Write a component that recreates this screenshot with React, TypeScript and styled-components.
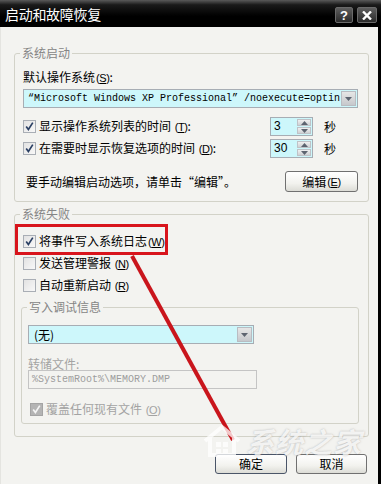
import styled, { createGlobalStyle } from 'styled-components';

const GlobalStyle = createGlobalStyle`
  html, body {
    margin: 0;
    padding: 0;
    background: #000000;
  }
  body {
    font-family: 'Noto Sans CJK SC', 'Liberation Sans', sans-serif;
    font-size: 12px;
    color: #000000;
  }
`;

const Key = ({ k }: { k: string }) => (
  <KeyText>
    (<u>{k}</u>)
  </KeyText>
);

const CheckBox = ({ checked = false, disabled = false }: { checked?: boolean; disabled?: boolean }) => (
  <Box $disabled={disabled}>
    {checked && (
      <svg width='11' height='11' viewBox='0 0 11 11'>
        <path
          d='M2.2 5.4 L4.4 8.4 L8.8 1.6'
          fill='none'
          stroke={disabled ? '#f4f4f4' : '#2a3f63'}
          strokeWidth='1.7'
        />
      </svg>
    )}
  </Box>
);

const DropArrow = () => (
  <DropButton>
    <svg width='7' height='4' viewBox='0 0 7 4'>
      <path d='M0 0 L7 0 L3.5 4 Z' fill='#5d6470' />
    </svg>
  </DropButton>
);

const Spinner = ({ value }: { value: string }) => (
  <SpinBox>
    <SpinValue>{value}</SpinValue>
    <SpinButtons>
      <SpinHalf>
        <svg width='7' height='4' viewBox='0 0 7 4'>
          <path d='M0 4 L7 4 L3.5 0 Z' fill='#5d6470' />
        </svg>
      </SpinHalf>
      <SpinHalf>
        <svg width='7' height='4' viewBox='0 0 7 4'>
          <path d='M0 0 L7 0 L3.5 4 Z' fill='#5d6470' />
        </svg>
      </SpinHalf>
    </SpinButtons>
  </SpinBox>
);

const App = () => {
  return (
    <>
      <GlobalStyle />
      <Frame>
        <TitleBar>
          <Title>启动和故障恢复</Title>
          <TitleButtons>
            <CaptionButton $width={18}>?</CaptionButton>
            <CaptionButton $width={20}>
              <svg width='10' height='9' viewBox='0 0 10 9'>
                <path d='M1 0.5 L9 8.5 M9 0.5 L1 8.5' stroke='#ffffff' strokeWidth='2.4' />
              </svg>
            </CaptionButton>
          </TitleButtons>
        </TitleBar>

        <Client>
          <Group $pad='0 10px 9px 8px'>
            <Legend $shift={-3}>系统启动</Legend>
            <FieldLabel>
              默认操作系统<Key k='S' />:
            </FieldLabel>
            <Combo $width='100%'>
              <ComboText $mono>“Microsoft Windows XP Professional” /noexecute=optin</ComboText>
              <DropArrow />
            </Combo>
            <SpinRow $top={9}>
              <CheckBox checked />
              <RowText>
                显示操作系统列表的时间 <Key k='T' />:
              </RowText>
              <Spinner value='3' />
              <Unit>秒</Unit>
            </SpinRow>
            <SpinRow $top={3}>
              <CheckBox checked />
              <RowText>
                在需要时显示恢复选项的时间 <Key k='D' />:
              </RowText>
              <Spinner value='30' />
              <Unit>秒</Unit>
            </SpinRow>
            <EditRow>
              <RowText>要手动编辑启动选项，请单击“编辑”。</RowText>
              <PushButton $width={73} $height={21}>
                编辑 <Key k='E' />
              </PushButton>
            </EditRow>
          </Group>

          <Group $pad='0 9px 12px 6px' $top={5}>
            <Legend $shift={-1}>系统失败</Legend>
            <CheckRow $top={9}>
              <CheckBox checked />
              <RowText>
                将事件写入系统日志<Key k='W' />
              </RowText>
            </CheckRow>
            <CheckRow>
              <CheckBox />
              <RowText>
                发送管理警报 <Key k='N' />
              </RowText>
            </CheckRow>
            <CheckRow>
              <CheckBox />
              <RowText>
                自动重新启动 <Key k='R' />
              </RowText>
            </CheckRow>

            <Group $pad='0 6px 4px 6px' $top={4}>
              <Legend $shift={-1}>写入调试信息</Legend>
              <Combo $width='226px' $top={11}>
                <ComboText>(无)</ComboText>
                <DropArrow />
              </Combo>
              <DimLabel>转储文件:</DimLabel>
              <FileField>%SystemRoot%\MEMORY.DMP</FileField>
              <CheckRow $top={10} $height={20}>
                <CheckBox checked disabled />
                <RowText $dim>
                  覆盖任何现有文件 <Key k='O' />
                </RowText>
              </CheckRow>
            </Group>
          </Group>

          <ButtonRow>
            <PushButton $width={72} $height={20} $default>
              确定
            </PushButton>
            <PushButton $width={71} $height={20}>
              取消
            </PushButton>
          </ButtonRow>
        </Client>

        <Annotation width='381' height='484' viewBox='0 0 381 484'>
          <rect x='16.5' y='225.5' width='150' height='28' fill='none' stroke='#d8141c' strokeWidth='3' />
          <line x1='132' y1='256' x2='233' y2='440' stroke='#c9151c' strokeWidth='4' />
        </Annotation>

        <Watermark>
          <svg width='40' height='34' viewBox='0 0 40 34'>
            <path
              d='M3 17 L20 3 L37 17 M8 14 L8 31 L32 31 L32 14'
              fill='none'
              stroke='rgba(255,255,255,0.9)'
              strokeWidth='4'
            />
            <rect x='14' y='18' width='5' height='5' fill='rgba(255,255,255,0.9)' />
            <rect x='21' y='18' width='5' height='5' fill='rgba(255,255,255,0.9)' />
            <rect x='14' y='25' width='5' height='4' fill='rgba(255,255,255,0.9)' />
            <rect x='21' y='25' width='5' height='4' fill='rgba(255,255,255,0.9)' />
          </svg>
          <WatermarkText>系统之家</WatermarkText>
        </Watermark>
      </Frame>
    </>
  );
};

const Frame = styled.div`
  position: relative;
  width: 381px;
  height: 484px;
  display: flex;
  flex-direction: column;
  background: #000000;
  overflow: hidden;
`;

const TitleBar = styled.div`
  height: 27px;
  display: flex;
  align-items: center;
  justify-content: space-between;
  padding: 0 4px 0 5px;
  background: linear-gradient(to bottom, #5a5a5a 0%, #1a1a1a 18%, #000000 60%, #000000 100%);
`;

const Title = styled.div`
  font-size: 14px;
  line-height: 18px;
  color: #ffffff;
  letter-spacing: -0.3px;
`;

const TitleButtons = styled.div`
  display: flex;
  gap: 4px;
  margin-top: 3px;
`;

const CaptionButton = styled.div<{ $width: number }>`
  width: ${(p) => p.$width}px;
  height: 16px;
  box-sizing: border-box;
  display: flex;
  align-items: center;
  justify-content: center;
  border: 1px solid #6a6a6a;
  border-radius: 2px;
  background: linear-gradient(to bottom, #5e5e5e, #2a2a2a);
  color: #ffffff;
  font-family: 'Liberation Sans', sans-serif;
  font-weight: 700;
  font-size: 13px;
`;

const Client = styled.div`
  flex: 1;
  margin-right: 3px;
  padding: 19px 9px 0 13px;
  background: #f3f3f0;
  border-left: 1px solid #e4e4e0;
  display: flex;
  flex-direction: column;
`;

const Group = styled.fieldset<{ $pad: string; $top?: number }>`
  margin: ${(p) => p.$top || 0}px 0 0 0;
  padding: ${(p) => p.$pad};
  border: 1px solid #d2d2c8;
  border-radius: 3px;
  min-width: 0;
  display: flex;
  flex-direction: column;
`;

const Legend = styled.legend<{ $shift: number }>`
  margin-left: ${(p) => p.$shift}px;
  padding: 0 2px;
  font-size: 12px;
  line-height: 14px;
  color: #858585;
`;

const KeyText = styled.span`
  margin-left: 1px;
  font-family: 'Liberation Sans', sans-serif;
  font-size: 11px;
  letter-spacing: -0.4px;
`;

const FieldLabel = styled.div`
  margin-top: 10px;
  line-height: 14px;
`;

const Combo = styled.div<{ $width: string; $top?: number }>`
  width: ${(p) => p.$width};
  height: 19px;
  margin-top: ${(p) => p.$top ?? 4}px;
  box-sizing: border-box;
  display: flex;
  align-items: center;
  border: 1px solid #a7adb4;
  background: #cdf7fb;
  padding: 1px;
`;

const ComboText = styled.div<{ $mono?: boolean }>`
  flex: 1;
  min-width: 0;
  overflow: hidden;
  white-space: nowrap;
  padding-left: ${(p) => (p.$mono ? 3 : 4)}px;
  font-family: ${(p) =>
    p.$mono ? "'Liberation Mono', monospace" : "'Noto Sans CJK SC', sans-serif"};
  font-size: ${(p) => (p.$mono ? 10 : 12)}px;
  line-height: 15px;
`;

const DropButton = styled.div`
  width: 15px;
  height: 15px;
  box-sizing: border-box;
  display: flex;
  align-items: center;
  justify-content: center;
  border: 1px solid #b9bcc2;
  background: linear-gradient(to bottom, #e6e6e6, #c6c8cc);
`;

const SpinRow = styled.div<{ $top: number }>`
  display: flex;
  align-items: center;
  height: 19px;
  margin-top: ${(p) => p.$top}px;
`;

const CheckRow = styled.div<{ $top?: number; $height?: number }>`
  display: flex;
  align-items: center;
  height: ${(p) => p.$height || 22}px;
  margin-top: ${(p) => p.$top || 0}px;
  padding-left: 2px;
`;

const Box = styled.div<{ $disabled: boolean }>`
  width: 13px;
  height: 13px;
  box-sizing: border-box;
  flex-shrink: 0;
  display: flex;
  align-items: center;
  justify-content: center;
  border: 1px solid ${(p) => (p.$disabled ? '#a4a4a4' : '#a9aeb5')};
  background: ${(p) =>
    p.$disabled ? '#b4b4b4' : 'linear-gradient(135deg, #e2e2e2, #f8f8f8)'};
`;

const RowText = styled.span<{ $dim?: boolean }>`
  flex: 1;
  margin-left: 3px;
  line-height: 14px;
  white-space: nowrap;
  color: ${(p) => (p.$dim ? '#a3a3a3' : '#000000')};
`;

const SpinBox = styled.div`
  width: 43px;
  height: 19px;
  box-sizing: border-box;
  display: flex;
  border: 1px solid #a7adb4;
  background: #cdf7fb;
`;

const SpinValue = styled.div`
  flex: 1;
  padding-left: 3px;
  font-family: 'Liberation Sans', sans-serif;
  font-size: 12px;
  line-height: 17px;
`;

const SpinButtons = styled.div`
  width: 14px;
  display: flex;
  flex-direction: column;
  padding: 1px;
  gap: 1px;
`;

const SpinHalf = styled.div`
  flex: 1;
  display: flex;
  align-items: center;
  justify-content: center;
  border: 1px solid #bfc2c7;
  background: linear-gradient(to bottom, #f0f0f0, #cfd1d4);
`;

const Unit = styled.span`
  width: 12px;
  margin: 0 22px 0 11px;
  line-height: 14px;
`;

const EditRow = styled.div`
  display: flex;
  align-items: center;
  margin-top: 13px;
`;

const PushButton = styled.div<{ $width: number; $height: number; $default?: boolean }>`
  width: ${(p) => p.$width}px;
  height: ${(p) => p.$height}px;
  box-sizing: border-box;
  display: flex;
  align-items: center;
  justify-content: center;
  border: 1px solid ${(p) => (p.$default ? '#4a5568' : '#707070')};
  border-radius: 3px;
  background: linear-gradient(to bottom, #ffffff 0%, #f2f2ee 60%, #dcdcd6 100%);
  font-size: 12px;
  line-height: 14px;
`;

const DimLabel = styled.div`
  margin-top: 13px;
  line-height: 13px;
  color: #a3a3a3;
`;

const FileField = styled.div`
  width: 229px;
  height: 19px;
  box-sizing: border-box;
  border: 1px solid #c4c4c4;
  padding-left: 3px;
  font-family: 'Liberation Mono', monospace;
  font-size: 10px;
  line-height: 17px;
  color: #9d9d9d;
`;

const ButtonRow = styled.div`
  display: flex;
  justify-content: flex-end;
  gap: 9px;
  margin-top: 17px;
  padding-right: 2px;
`;

const Annotation = styled.svg`
  position: absolute;
  left: 0;
  top: 0;
  pointer-events: none;
`;

const Watermark = styled.div`
  position: absolute;
  left: 202px;
  top: 424px;
  display: flex;
  align-items: center;
  gap: 4px;
  opacity: 0.85;
  pointer-events: none;
`;

const WatermarkText = styled.span`
  font-family: 'Noto Sans CJK SC', sans-serif;
  font-size: 28px;
  font-weight: 700;
  font-style: italic;
  line-height: 32px;
  color: rgba(255, 255, 255, 0.85);
  text-shadow: 0 0 2px rgba(120, 120, 120, 0.6);
  letter-spacing: 1px;
`;

export default App;
